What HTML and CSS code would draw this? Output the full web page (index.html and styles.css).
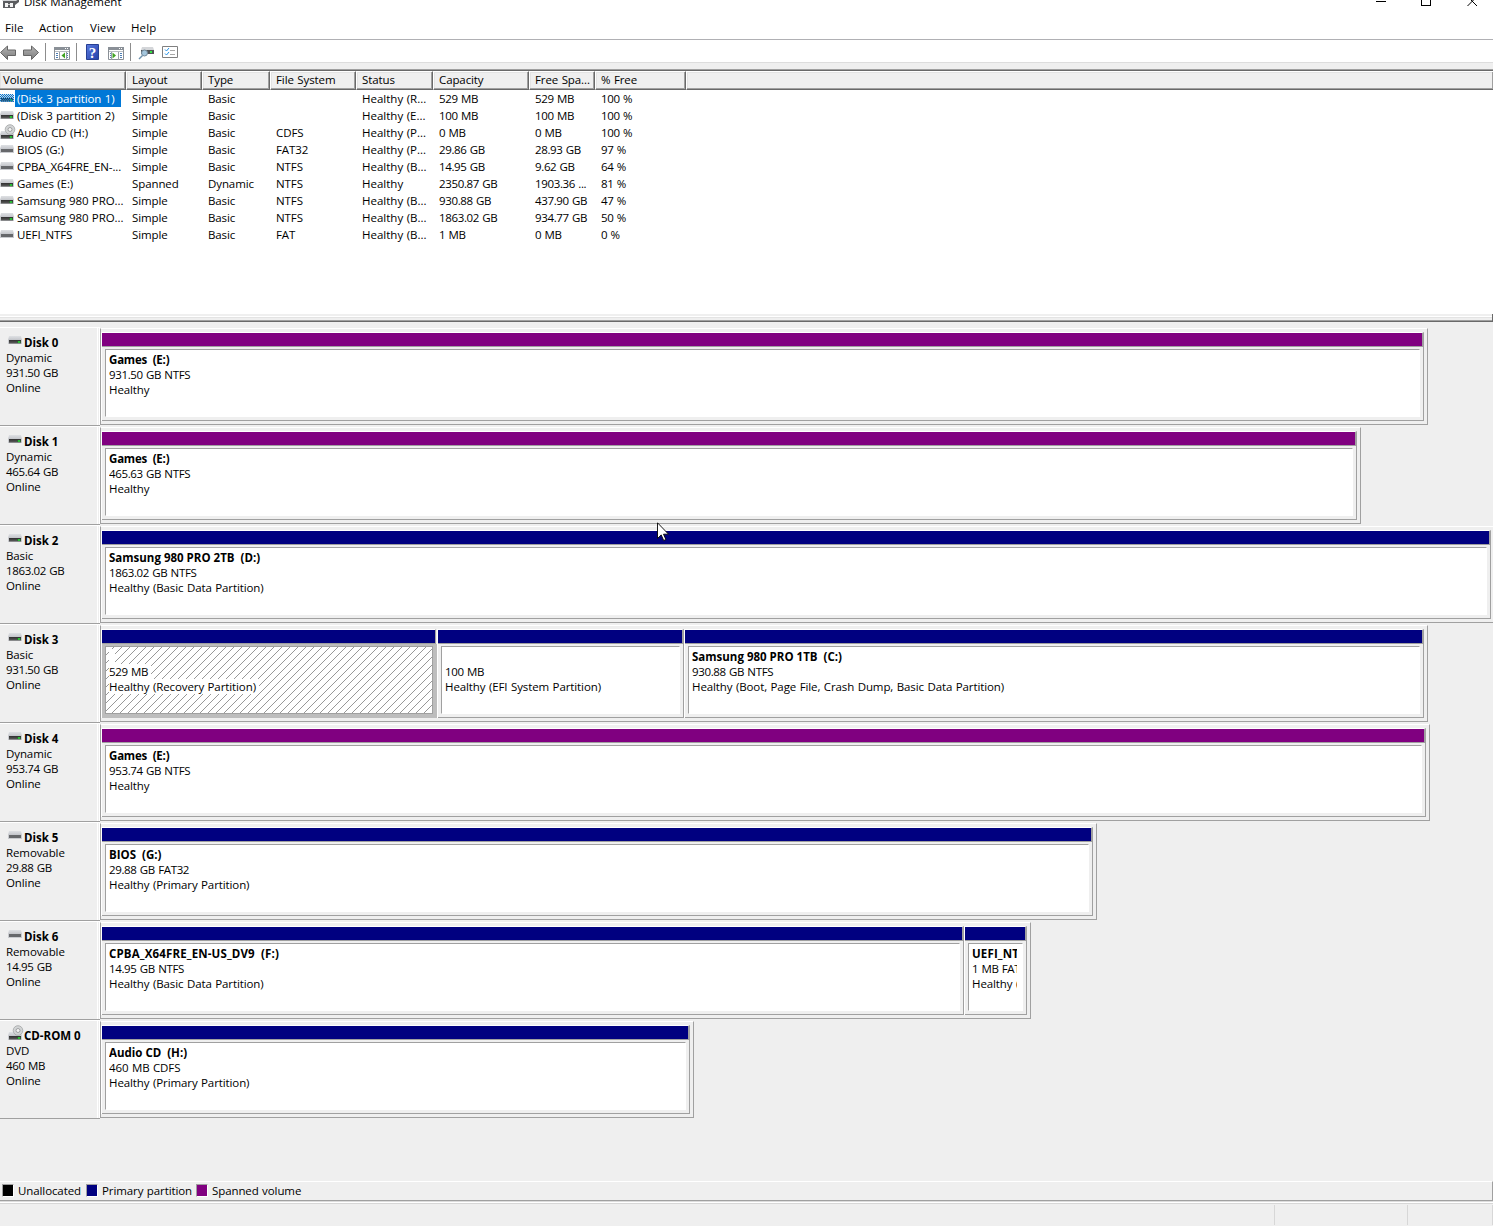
FILE: index.html
```html
<!DOCTYPE html>
<html lang="en">
<head>
  <meta charset="UTF-8" />
  <title>Disk Management</title>
  <link rel="stylesheet" href="styles.css">
</head>
<body>
  <!-- shared icons -->
  <svg class="defs" width="0" height="0">
    <defs>
      <linearGradient id="top" x1="0" y1="0" x2="0" y2="1"><stop offset="0" stop-color="#dfe1e4"/><stop offset="1" stop-color="#c3c5ca"/></linearGradient>
      <linearGradient id="face" x1="0" y1="0" x2="0" y2="1"><stop offset="0" stop-color="#2f2f2f"/><stop offset="1" stop-color="#606060"/></linearGradient>
      <linearGradient id="arrow" x1="0" y1="0" x2="0" y2="1"><stop offset="0" stop-color="#b5b5b5"/><stop offset="1" stop-color="#7c7c7c"/></linearGradient>
      <linearGradient id="blue" x1="0" y1="0" x2="1" y2="1"><stop offset="0" stop-color="#5b7be0"/><stop offset="1" stop-color="#2340a8"/></linearGradient>
      <pattern id="dots" width="2" height="2" patternUnits="userSpaceOnUse"><path d="M0 0h1v1H0zM1 1h1v1H1z" fill="#0078d7"/></pattern>
    </defs>
    <symbol id="drive" viewBox="0 0 14 16">
      <path d="M1 4h12l1 4H0z" fill="url(#top)"/>
      <path d="M0 8h14v4H0z" fill="#c9cbcf"/>
      <path d="M1 8h12v3.6H1z" fill="url(#face)"/>
      <path d="M9.500 9h3v2h-3z" fill="#1d7a25"/><path d="M10 9.500h2v1h-2z" fill="#3cff4a"/>
    </symbol>
    <symbol id="removable" viewBox="0 0 14 16">
      <path d="M1 4h12l1 4H0z" fill="url(#top)"/>
      <path d="M0 8h14v4H0z" fill="#c9cbcf"/>
      <path d="M1 8h12v3H1z" fill="#66686b"/>
    </symbol>
    <symbol id="cd" viewBox="0 0 16 16">
      <path d="M1 7h12l1 4H0z" fill="url(#top)"/>
      <circle cx="10" cy="5.500" r="4.800" fill="#d2d4d5" stroke="#a2a4a5" stroke-width=".8"/>
      <circle cx="10" cy="5.500" r="2" fill="#f5f5f5" stroke="#8f9192" stroke-width=".8"/>
      <path d="M0 11h14v4H0z" fill="#c9cbcf"/>
      <path d="M1 11h12v3.600H1z" fill="url(#face)"/>
      <path d="M9.500 12h3v2h-3z" fill="#1d7a25"/><path d="M10 12.500h2v1h-2z" fill="#3cff4a"/>
    </symbol>
  </svg>

  <div class="titlebar">
    <svg class="app-icon" width="17" height="16" viewBox="0 0 17 16"><path d="M2 4h12l2 3H0z" fill="#d2d4d6"/><path d="M1 7h13l3-2v3l-4 3v3H1z" fill="#5b5d60"/><path d="M3 9h3v4H3zM8 9h3v4H8z" fill="#f4f4f4"/><path d="M6 10h2v1H6z" fill="#ccc"/></svg>
    <span class="title">Disk Management</span>
    <svg class="win-buttons" width="110" height="16" viewBox="0 0 110 16" fill="none" stroke="#000"><path d="M3 9.500h10" shape-rendering="crispEdges"/><path d="M48.500 4.500h9v9h-9z" shape-rendering="crispEdges"/><path d="M94.500 4.500l9.500 9.500M104 4.500L94.500 14"/></svg>
  </div>

  <div class="menubar">
    <span class="m-file">File</span>
    <span class="m-action">Action</span>
    <span class="m-view">View</span>
    <span class="m-help">Help</span>
  </div>

  <div class="toolbar">
    <svg width="200" height="22" viewBox="0 40 200 22">
      <path d="M.5 52.500L7.500 46v4h8v5.500h-8v4z" fill="url(#arrow)" stroke="#666"/>
      <path d="M38.500 52.500L31.500 46v4h-8v5.500h8v4z" fill="url(#arrow)" stroke="#666"/>
      <path d="M45 43h1v18h-1zM76 43h1v18h-1zM130 43h1v18h-1z" fill="#8d8d8d"/>
      <!-- show/hide console tree -->
      <path d="M54.500 47.500h15v12h-15z" fill="#fff" stroke="#8a9097"/>
      <path d="M54 47h16v3H54z" fill="#8a9097"/><path d="M65 48h1v1h-1zM67 48h1v1h-1z" fill="#fff"/>
      <path d="M55 51h14v1H55z" fill="#b9bdc2"/>
      <path d="M56 53h2v1h-2zM56 55h2v1h-2zM56 57h2v1h-2zM67 53h1v1h-1zM67 55h1v1h-1zM67 57h1v1h-1z" fill="#4d7db3"/>
      <path d="M59 52h1v8h-1zM66 52h1v8h-1z" fill="#9a9fa5"/>
      <path d="M65 52.500v6l-3.500-3z" fill="#3fa321"/>
      <!-- help -->
      <path d="M86.500 44.500h12v15h-12z" fill="url(#blue)" stroke="#263f93"/>
      <text x="88.800" y="57.500" class="help-mark">?</text>
      <!-- show/hide action pane -->
      <path d="M108.500 47.500h15v12h-15z" fill="#fff" stroke="#8a9097"/>
      <path d="M108 47h16v3h-16z" fill="#8a9097"/><path d="M119 48h1v1h-1zM121 48h1v1h-1z" fill="#fff"/>
      <path d="M109 51h14v1h-14z" fill="#b9bdc2"/>
      <path d="M110 53h1v1h-1zM110 55h1v1h-1zM110 57h1v1h-1zM120 53h2v1h-2zM120 55h2v1h-2zM120 57h2v1h-2z" fill="#4d7db3"/>
      <path d="M111 52h1v8h-1zM118 52h1v8h-1z" fill="#9a9fa5"/>
      <path d="M112.500 52.500v6l3.500-3z" fill="#3fa321"/>
      <!-- rescan -->
      <path d="M142 47h11l1 3h-13z" fill="#d4d6d9"/><path d="M141 50h13v4h-13z" fill="#505356"/><path d="M150 51h2v2h-2z" fill="#35e845"/>
      <circle cx="144.500" cy="53" r="3" fill="#a4c6dd" stroke="#74899a"/><path d="M142.500 55.500l-3.500 3.500" stroke="#6d91ad" stroke-width="1.500"/>
      <!-- settings list -->
      <path d="M162.500 46.500h15v11h-15z" fill="#fff" stroke="#808080"/>
      <path d="M165 49.500l1.500 1.500 2.500-3M165 53.500l1.500 1.500 2.500-3" fill="none" stroke="#2492e8"/>
      <path d="M170 50h5v1h-5zM170 54h5v1h-5z" fill="#a8a8a8"/>
    </svg>
  </div>
  <div class="rebar"></div>

  <div class="volumes">
    <div class="vrow vhead">
      <span>Volume</span><span>Layout</span><span>Type</span><span>File System</span><span>Status</span><span>Capacity</span><span>Free Spa...</span><span>% Free</span><span></span>
    </div>
    <div class="vrow selected"><span><svg class="vi"><use href="#drive"/><rect y="4" width="14" height="8" fill="url(#dots)"/></svg><b>(Disk 3 partition 1)</b></span><span>Simple</span><span>Basic</span><span></span><span>Healthy (R...</span><span>529 MB</span><span>529 MB</span><span>100 %</span></div>
    <div class="vrow"><span><svg class="vi"><use href="#drive"/></svg><b>(Disk 3 partition 2)</b></span><span>Simple</span><span>Basic</span><span></span><span>Healthy (E...</span><span>100 MB</span><span>100 MB</span><span>100 %</span></div>
    <div class="vrow"><span><svg class="vi cd"><use href="#cd"/></svg><b>Audio CD (H:)</b></span><span>Simple</span><span>Basic</span><span>CDFS</span><span>Healthy (P...</span><span>0 MB</span><span>0 MB</span><span>100 %</span></div>
    <div class="vrow"><span><svg class="vi"><use href="#removable"/></svg><b>BIOS (G:)</b></span><span>Simple</span><span>Basic</span><span>FAT32</span><span>Healthy (P...</span><span>29.86 GB</span><span>28.93 GB</span><span>97 %</span></div>
    <div class="vrow"><span><svg class="vi"><use href="#removable"/></svg><b>CPBA_X64FRE_EN-...</b></span><span>Simple</span><span>Basic</span><span>NTFS</span><span>Healthy (B...</span><span>14.95 GB</span><span>9.62 GB</span><span>64 %</span></div>
    <div class="vrow"><span><svg class="vi"><use href="#drive"/></svg><b>Games (E:)</b></span><span>Spanned</span><span>Dynamic</span><span>NTFS</span><span>Healthy</span><span>2350.87 GB</span><span>1903.36 ...</span><span>81 %</span></div>
    <div class="vrow"><span><svg class="vi"><use href="#drive"/></svg><b>Samsung 980 PRO...</b></span><span>Simple</span><span>Basic</span><span>NTFS</span><span>Healthy (B...</span><span>930.88 GB</span><span>437.90 GB</span><span>47 %</span></div>
    <div class="vrow"><span><svg class="vi"><use href="#drive"/></svg><b>Samsung 980 PRO...</b></span><span>Simple</span><span>Basic</span><span>NTFS</span><span>Healthy (B...</span><span>1863.02 GB</span><span>934.77 GB</span><span>50 %</span></div>
    <div class="vrow"><span><svg class="vi"><use href="#removable"/></svg><b>UEFI_NTFS</b></span><span>Simple</span><span>Basic</span><span>FAT</span><span>Healthy (B...</span><span>1 MB</span><span>0 MB</span><span>0 %</span></div>
  </div>
  <div class="splitter"></div>

  <div class="disks">
    <div class="disk">
      <div class="label"><h3><svg class="di"><use href="#drive"/></svg>Disk 0</h3><p>Dynamic</p><p class="size">931.50 GB</p><p>Online</p></div>
      <div class="graph">
        <div class="part spanned" style="width:1323px"><div class="bar"></div><div class="body"><div class="box"><h4>Games&nbsp; (E:)</h4><p class="size">931.50 GB NTFS</p><p>Healthy</p></div></div></div>
      </div>
    </div>
    <div class="disk">
      <div class="label"><h3><svg class="di"><use href="#drive"/></svg>Disk 1</h3><p>Dynamic</p><p class="size">465.64 GB</p><p>Online</p></div>
      <div class="graph">
        <div class="part spanned" style="width:1256px"><div class="bar"></div><div class="body"><div class="box"><h4>Games&nbsp; (E:)</h4><p class="size">465.63 GB NTFS</p><p>Healthy</p></div></div></div>
      </div>
    </div>
    <div class="disk">
      <div class="label"><h3><svg class="di"><use href="#drive"/></svg>Disk 2</h3><p>Basic</p><p class="size">1863.02 GB</p><p>Online</p></div>
      <div class="graph">
        <div class="part" style="width:1390px"><div class="bar"></div><div class="body"><div class="box"><h4>Samsung 980 PRO 2TB&nbsp; (D:)</h4><p class="size">1863.02 GB NTFS</p><p>Healthy (Basic Data Partition)</p></div></div></div>
      </div>
    </div>
    <div class="disk">
      <div class="label"><h3><svg class="di"><use href="#drive"/></svg>Disk 3</h3><p>Basic</p><p class="size">931.50 GB</p><p>Online</p></div>
      <div class="graph">
        <div class="part picked" style="width:336px"><div class="bar"></div><div class="body"><div class="box"><svg class="hatch" width="327" height="66"><defs><pattern id="hatch" width="8" height="8" patternUnits="userSpaceOnUse"><path d="M-1 9L9 -1M-1 1L1 -1M7 9L9 7" stroke="#8c8c8c" stroke-width=".9"/></pattern></defs><rect width="327" height="66" fill="url(#hatch)"/></svg><h4><i>&nbsp;</i></h4><p class="size"><i>529 MB</i></p><p><i>Healthy (Recovery Partition)</i></p></div></div></div>
        <div class="part" style="width:247px"><div class="bar"></div><div class="body"><div class="box"><h4>&nbsp;</h4><p class="size">100 MB</p><p>Healthy (EFI System Partition)</p></div></div></div>
        <div class="part" style="width:740px"><div class="bar"></div><div class="body"><div class="box"><h4>Samsung 980 PRO 1TB&nbsp; (C:)</h4><p class="size">930.88 GB NTFS</p><p>Healthy (Boot, Page File, Crash Dump, Basic Data Partition)</p></div></div></div>
      </div>
    </div>
    <div class="disk">
      <div class="label"><h3><svg class="di"><use href="#drive"/></svg>Disk 4</h3><p>Dynamic</p><p class="size">953.74 GB</p><p>Online</p></div>
      <div class="graph">
        <div class="part spanned" style="width:1325px"><div class="bar"></div><div class="body"><div class="box"><h4>Games&nbsp; (E:)</h4><p class="size">953.74 GB NTFS</p><p>Healthy</p></div></div></div>
      </div>
    </div>
    <div class="disk">
      <div class="label"><h3><svg class="di"><use href="#removable"/></svg>Disk 5</h3><p>Removable</p><p class="size">29.88 GB</p><p>Online</p></div>
      <div class="graph">
        <div class="part" style="width:992px"><div class="bar"></div><div class="body"><div class="box"><h4>BIOS&nbsp; (G:)</h4><p class="size">29.88 GB FAT32</p><p>Healthy (Primary Partition)</p></div></div></div>
      </div>
    </div>
    <div class="disk">
      <div class="label"><h3><svg class="di"><use href="#removable"/></svg>Disk 6</h3><p>Removable</p><p class="size">14.95 GB</p><p>Online</p></div>
      <div class="graph">
        <div class="part" style="width:863px"><div class="bar"></div><div class="body"><div class="box"><h4 class="wide">CPBA_X64FRE_EN-US_DV9&nbsp; (F:)</h4><p class="size">14.95 GB NTFS</p><p>Healthy (Basic Data Partition)</p></div></div></div>
        <div class="part" style="width:63px"><div class="bar"></div><div class="body"><div class="box"><h4 class="wide">UEFI_NTFS</h4><p class="size">1 MB FAT</p><p>Healthy (Basic</p></div></div></div>
      </div>
    </div>
    <div class="disk">
      <div class="label"><h3><svg class="di cd"><use href="#cd"/></svg>CD-ROM 0</h3><p>DVD</p><p class="size">460 MB</p><p>Online</p></div>
      <div class="graph">
        <div class="part" style="width:589px"><div class="bar"></div><div class="body"><div class="box"><h4>Audio CD&nbsp; (H:)</h4><p>460 MB CDFS</p><p>Healthy (Primary Partition)</p></div></div></div>
      </div>
    </div>
  </div>

  <div class="legend">
    <div class="key unallocated"><i></i>Unallocated</div>
    <div class="key primary"><i></i>Primary partition</div>
    <div class="key spanned"><i></i>Spanned volume</div>
  </div>
  <div class="statusbar"><span></span><span></span><span></span></div>

  <svg class="cursor" width="12" height="19" viewBox="0 0 12 19"><path d="M.5 .8v15.700l3.700-3.600 2.500 5.600 2.200-1-2.400-5.300h5z" fill="#fff" stroke="#000" stroke-width=".9"/></svg>
</body>
</html>
```
FILE: styles.css
```css
* { box-sizing: border-box; }
body {
  margin: 0;
  width: 1493px;
  height: 1226px;
  overflow: hidden;
  display: flex;
  flex-direction: column;
  background: #efefef;
  color: #000;
  font-family: "Open Sans", "Noto Sans", sans-serif;
  font-size: 11.5px;
  letter-spacing: -0.1px;
  word-spacing: 0.6px;
  line-height: 15px;
  position: relative;
}
h3, h4, p { margin: 0; font-size: inherit; }
i, b { font-style: normal; font-weight: normal; }
svg { display: block; flex: none; }
.defs { position: absolute; }

.titlebar {
  height: 18px;
  display: flex;
  align-items: flex-start;
  background: #fff;
  overflow: hidden;
}
.app-icon { margin: -6px 0 0 2px; }
.title { margin: -6px 0 0 5px; letter-spacing: 0; }
.win-buttons { margin: -8px 10px 0 auto; }

.menubar {
  height: 22px;
  display: flex;
  align-items: center;
  padding: 0 0 2px 5px;
  background: #fff;
  border-bottom: 1px solid #b0b0b4;
  letter-spacing: 0.1px;
}
.m-file { width: 34px; }
.m-action { width: 51px; }
.m-view { width: 41px; }

.toolbar { height: 22px; background: #fff; }
.help-mark { font: bold 15px "Liberation Serif", serif; fill: #fff; }
.rebar {
  height: 9px;
  border-top: 1px solid #ddd;
  border-bottom: 1px solid #696969;
  box-shadow: inset 0 -1px #a0a0a0;
}

.volumes { height: 243px; background: #fff; }
.vrow { display: flex; height: 17px; line-height: 17px; white-space: nowrap; }
.vrow span { padding-left: 6px; }
.vrow span:nth-child(1) { width: 126px; padding-left: 0; display: flex; }
.vrow span:nth-child(2) { width: 76px; }
.vrow span:nth-child(3) { width: 68px; }
.vrow span:nth-child(4) { width: 86px; }
.vrow span:nth-child(5) { width: 77px; letter-spacing: 0; }
.vrow span:nth-child(6) { width: 96px; letter-spacing: -0.35px; }
.vrow span:nth-child(7) { width: 66px; letter-spacing: -0.35px; }
.vrow span:nth-child(8) { width: 91px; letter-spacing: -0.3px; }
.vrow b { padding: 0 6px 0 2px; margin-left: 1px; }
.selected b { background: #0078d7; color: #fff; }
.vi { width: 14px; height: 16px; }
.vi.cd { width: 16px; margin-right: -2px; }
.vhead { height: 19px; line-height: 16px; }
.vhead span {
  background: #efefef;
  border: 1px solid;
  border-color: #fff #696969 #696969 #fff;
  box-shadow: inset -1px -1px #a0a0a0, inset 1px 1px #e3e3e3;
  padding-left: 5px;
}
.vrow.vhead span { padding-left: 5px; letter-spacing: -0.1px; }
.vrow.vhead span:nth-child(1) { padding-left: 3px; border-left: 0; }
.vhead span:nth-child(9) { flex: 1; border-right: 0; }

.splitter {
  height: 8px;
  margin-bottom: 5px;
  background: linear-gradient(#efefef 2px, #fff 2px, #fff 3px, #e3e3e3 3px, #e3e3e3 4px, #efefef 4px, #efefef 6px, #a0a0a0 6px, #a0a0a0 7px, #696969 7px);
  border-right: 1px solid #696969;
}

.disks { height: 854px; overflow: hidden; }
.disk { display: flex; height: 99px; }
.label {
  width: 100px;
  flex: none;
  padding: 7px 0 0 6px;
  border-top: 1px solid #fff;
  border-bottom: 1px solid #a0a0a0;
  background: linear-gradient(90deg, transparent 97px, #fff 97px, #fff 98px, transparent 98px, transparent 99px, #fff 99px);
}
.label h3 { display: flex; height: 15px; white-space: nowrap; }
.di { width: 14px; height: 16px; margin: -3px 2px 0; }
.di.cd { width: 16px; margin: -3px 0 0 2px; }
h3, h4 { font-weight: bold; letter-spacing: 0; word-spacing: 0; }
.spanned h4 { letter-spacing: -0.2px; }
.wide { letter-spacing: 0.15px; }
.size { letter-spacing: -0.35px; }

.graph {
  display: flex;
  flex: none;
  height: 97px;
  margin-top: 1px;
  padding: 3px 3px 3px 0;
  border: 1px solid #a0a0a0;
  border-top-color: #fff;
}
.part { border-left: 1px solid #fff; flex: none; }
.bar {
  height: 15px;
  background: #000080;
  border-top: 1px solid #fff;
  border-right: 2px solid #a0a0a0;
  border-bottom: 1px solid #a0a0a0;
}
.spanned .bar { background: #800080; }
.body {
  height: 74px;
  padding: 2px 3px 3px;
  border-right: 1px solid #a0a0a0;
  border-bottom: 1px solid #a0a0a0;
}
.box {
  height: 68px;
  padding: 2px 5px 0 3px;
  background: #fff;
  border: 1px solid #a0a0a0;
  border-right-color: #fff;
  border-bottom-color: #fff;
  overflow: hidden;
  white-space: nowrap;
  position: relative;
}
.box h4, .box p { position: relative; overflow: hidden; height: 15px; }
.picked .bar { border-right-width: 1px; width: 334px; }
.picked .body { background: #bdbdbd; border-color: #bdbdbd; }
.picked .box { border-color: #a0a0a0; }
.picked i { background: #fff; display: inline-block; padding-right: 3px; }
.hatch { position: absolute; left: 0; top: 0; }

.legend {
  height: 20px;
  display: flex;
  align-items: center;
  padding: 0 0 1px 2px;
  border-top: 1px solid #fff;
  border-right: 1px solid #a0a0a0;
  border-bottom: 1px solid #a0a0a0;
}
.key { display: flex; align-items: center; width: 110px; }
.key.unallocated { width: 84px; }
.key i {
  width: 12px;
  height: 13px;
  margin-right: 4px;
  background: #000;
  border: 1px solid;
  border-color: #a0a0a0 #fff #fff #a0a0a0;
}
.key.primary i { background: #000080; }
.key.spanned i { background: #800080; }

.statusbar {
  height: 25px;
  display: flex;
  padding: 4px 0 1px;
  background: linear-gradient(#dcdcdc 1px, #fff 1px, #fff 2px, #d7d7d7 2px, #d7d7d7 3px, transparent 3px);
}
.statusbar span { border-right: 1px solid #d7d7d7; width: 1275px; }
.statusbar span:nth-child(2) { width: 133px; }
.statusbar span:nth-child(3) { width: 85px; }

.cursor { position: absolute; left: 657px; top: 522px; }
```
